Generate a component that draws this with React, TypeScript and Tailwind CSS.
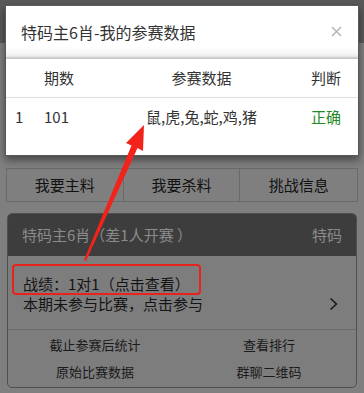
const font = { fontFamily: '"Noto Sans CJK SC", "Noto Sans", sans-serif' };

type Row = { idx: number; period: string; data: string; ok: boolean };

const rows: Row[] = [{ idx: 1, period: "101", data: "鼠,虎,兔,蛇,鸡,猪", ok: true }];

function Chevron() {
  return (
    <svg width="9" height="14" viewBox="0 0 9 14">
      <polyline points="1.5,1.5 7.5,7 1.5,12.5" fill="none" stroke="#111" strokeWidth="1.4" />
    </svg>
  );
}

function DataModal() {
  return (
    <div className="absolute left-[5px] top-[5px] w-[354px] bg-white border border-[#5a5a5a] shadow-[0_4px_8px_rgba(0,0,0,0.45)]">
      <div className="h-[52px] flex items-center justify-between pl-[15px] pr-[16px] border-b border-[#dcdcdc] bg-gradient-to-b from-white from-80% to-[#f1f1f1]">
        <span className="text-[16px] text-[#333]">特码主6肖-我的参赛数据</span>
        <svg width="11" height="11" viewBox="0 0 11 11">
          <path d="M1 1L10 10M10 1L1 10" stroke="#b8b8b8" strokeWidth="1.6" />
        </svg>
      </div>
      <div className="border-t border-[#c8c8c8] shadow-[0_-2px_3px_rgba(0,0,0,0.08)] pb-[19px] text-[15px] text-[#333]">
        <div className="h-[39px] flex items-center px-[9px] border-b border-[#dedede]">
          <span className="w-[29px]"></span>
          <span className="w-[70px]">期数</span>
          <span className="flex-1 text-center">参赛数据</span>
          <span className="w-[60px] text-right pr-[8px]">判断</span>
        </div>
        {rows.map((r) => (
          <div key={r.idx} className="h-[38px] flex items-center px-[9px]">
            <span className="w-[29px]">{r.idx}</span>
            <span className="w-[70px]">{r.period}</span>
            <span className="flex-1 text-center">{r.data}</span>
            <span className="w-[60px] text-right pr-[8px] text-[#1f8a24]">{r.ok ? "正确" : "错误"}</span>
          </div>
        ))}
      </div>
    </div>
  );
}

function Arrow() {
  return (
    <svg className="absolute left-0 top-0 pointer-events-none" width="364" height="393" viewBox="0 0 364 393">
      <polygon
        points="144,125 143,151 137.5,148 86,261 84,260 131.5,145.5 126,143"
        fill="#f2231b"
      />
    </svg>
  );
}

export default function App() {
  return (
    <div className="relative w-[364px] h-[393px] overflow-hidden bg-[#7f7f7f]" style={font}>
      <div className="h-[43px] bg-[#595959]"></div>
      <div className="px-[6px] pt-[125px]">
        <div className="grid grid-cols-3 h-[34px] border border-[#6a6a6a] text-[15px] text-[#111]">
          <div className="flex items-center justify-center border-r border-[#6a6a6a]">我要主料</div>
          <div className="flex items-center justify-center border-r border-[#6a6a6a]">我要杀料</div>
          <div className="flex items-center justify-center">挑战信息</div>
        </div>

        <div className="mt-[11px] mx-[1px] rounded-[5px] border border-[#4f4f4f] overflow-hidden bg-[#7d7d7d]">
          <div className="h-[42px] bg-[#3d3d3d] flex items-center justify-between pl-[14px] pr-[14px] text-[15px] text-[#8b8b8b]">
            <span>特码主6肖（差1人开赛 ）</span>
            <span>特码</span>
          </div>
          <div className="pt-[8px] pb-[16px] pl-[4px] pr-[18px] text-[15px] text-[#141414]">
            <div className="w-[189px] border-2 border-[#e8231c] rounded-[4px] pt-[9px] pl-[9px] leading-[18px]">
              战绩：1对1（点击查看）
            </div>
            <div className="flex items-center justify-between pl-[11px] leading-[18px]">
              <span>本期未参与比赛，点击参与</span>
              <Chevron />
            </div>
          </div>
          <div className="border-t border-[#6b6b6b] grid grid-cols-2 pt-[1px] pb-[2px] text-[13px] text-[#1a1a1a]">
            <div className="h-[27px] flex items-center justify-center">截止参赛后统计</div>
            <div className="h-[27px] flex items-center justify-center">查看排行</div>
            <div className="h-[27px] flex items-center justify-center">原始比赛数据</div>
            <div className="h-[27px] flex items-center justify-center">群聊二维码</div>
          </div>
        </div>
      </div>

      <DataModal />
      <Arrow />
    </div>
  );
}
